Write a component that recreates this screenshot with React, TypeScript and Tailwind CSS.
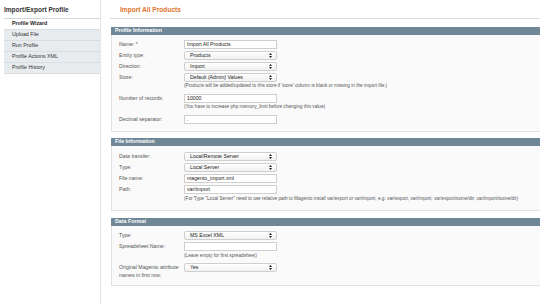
import React from 'react';

const font = { fontFamily: '"Liberation Sans", Arial, sans-serif' };

const sideItems = ['Profile Wizard', 'Upload File', 'Run Profile', 'Profile Actions XML', 'Profile History'];

const Arrows = () => (
  <svg width="3" height="5" viewBox="0 0 3 5" className="shrink-0">
    <path d="M0 2 L1.5 0 L3 2 Z" fill="#222" />
    <path d="M0 3 L1.5 5 L3 3 Z" fill="#222" />
  </svg>
);

const Field = ({ value, select }: { value: string; select?: boolean }) => (
  <div
    className={`w-[93px] h-[9px] flex items-center justify-between pl-[2px] pr-[4px] text-[5.2px] text-[#222] border border-[#cfcfcf] ${
      select ? 'bg-gradient-to-b from-white to-[#f1f1f1] rounded-[2px] pl-[5px]' : 'bg-white'
    }`}
  >
    <span className="leading-none whitespace-nowrap">{value}</span>
    {select && <Arrows />}
  </div>
);

const Row = ({ label, value, select }: { label: string; value: string; select?: boolean }) => (
  <div className="flex items-center h-[11px]">
    <div className="w-[65px] text-[5.2px] text-[#555] leading-none whitespace-nowrap">{label}</div>
    <Field value={value} select={select} />
  </div>
);

const Note = ({ text, className = '' }: { text: string; className?: string }) => (
  <div className={`pl-[65px] h-[7px] flex items-center text-[4.7px] text-[#555] whitespace-nowrap leading-none ${className}`}>
    {text}
  </div>
);

const Section = ({ title, children, body }: { title: string; children: React.ReactNode; body: string }) => (
  <div className="w-[460px] ml-[1px]">
    <div className="h-[8px] bg-[#6f8796] flex items-center pl-[4px] text-white font-bold text-[5.3px] leading-none">
      {title}
    </div>
    <div className={`bg-[#fafafa] border border-t-0 border-[#e2e2e2] pl-[7px] ${body}`}>{children}</div>
  </div>
);

export default function App() {
  return (
    <div className="w-[540px] h-[304px] overflow-hidden bg-white flex" style={font}>
      {/* sidebar */}
      <div className="w-[101px] shrink-0 border-r border-[#e4e4e4] h-full">
        <div className="ml-[4px] h-[19px] border-b border-[#d6d6d6] flex items-center pt-[1px] font-bold text-[6.5px] text-[#333] whitespace-nowrap">
          Import/Export Profile
        </div>
        <div className="ml-[4px]">
          {sideItems.map((it, i) => (
            <div
              key={it}
              className={`h-[11px] flex items-center pl-[8px] text-[5.3px] leading-none border-b border-[#d8dee2] ${
                i === 0 ? 'bg-white font-bold text-[#222]' : 'bg-[#e8ecee] text-[#333]'
              }`}
            >
              {it}
            </div>
          ))}
        </div>
      </div>

      {/* main */}
      <div className="flex-1 pl-[9px] overflow-hidden">
        <div className="h-[19px] border-b border-[#dcdcdc] flex items-center pl-[10px] pt-[1px] font-bold text-[6.6px] text-[#e0732a]">
          Import All Products
        </div>
        <div className="mt-[8px]">
          <Section title="Profile Information" body="pt-[4px] pb-[6px]">
            <Row label="Name: *" value="Import All Products" />
            <Row label="Entity type:" value="Products" select />
            <Row label="Direction:" value="Import" select />
            <Row label="Store:" value="Default (Admin) Values" select />
            <Note
              className="mb-[3px]"
              text="(Products will be added/updated to this store if 'store' column is blank or missing in the import file.)"
            />
            <Row label="Number of records:" value="10000" />
            <Note className="mb-[3px]" text="(You have to increase php memory_limit before changing this value)" />
            <Row label="Decimal separator:" value="." />
          </Section>
        </div>
        <div className="mt-[6px]">
          <Section title="File Information" body="pt-[5px] pb-[7px]">
            <Row label="Data transfer:" value="Local/Remote Server" select />
            <Row label="Type:" value="Local Server" select />
            <Row label="File name:" value="magento_import.xml" />
            <Row label="Path:" value="var/import" />
            <Note
              className="mt-[1px]"
              text={'(For Type "Local Server" need to use relative path to Magento install var/export or var/import, e.g. var/export, var/import, var/export/some/dir, var/import/some/dir)'}
            />
          </Section>
        </div>
        <div className="mt-[7px]">
          <Section title="Data Format" body="pt-[4px] pb-[6px]">
            <Row label="Type:" value="MS Excel XML" select />
            <Row label="Spreadsheet Name:" value="" />
            <Note className="mt-[1px] mb-[3px]" text="(Leave empty for first spreadsheet)" />
            <div className="flex items-start">
              <div className="w-[65px] text-[5.2px] text-[#555] leading-[8px]">
                Original Magento attribute
                <br />
                names in first row:
              </div>
              <Field value="Yes" select />
            </div>
          </Section>
        </div>
      </div>
    </div>
  );
}
